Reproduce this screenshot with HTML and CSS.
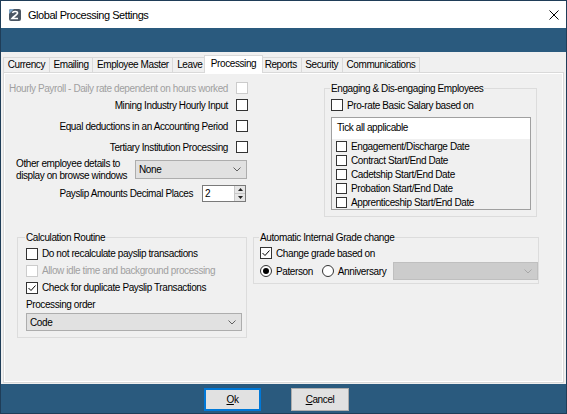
FILE: index.html
```html
<!DOCTYPE html>
<html lang="en">

<head>
    <meta charset="UTF-8">
    <title>Global Processing Settings</title>
    <link rel="stylesheet" href="styles.css">
</head>

<body>
    <div class="window">
        <div class="titlebar">
            <svg class="app-icon" width="12" height="12" viewBox="0 0 12 12">
                <rect x="0" y="0" width="12" height="12" rx="2" fill="#4a5563" />
                <path d="M0 5 L5 0 L2 0 Q0 0 0 2 Z" fill="#7fa6c8" />
                <path d="M3.5 4 C4 1.8 9 2 8.5 4.3 C8 6 5 7 3 9.5 L9 9.5" stroke="#fff" stroke-width="1.6" fill="none" />
            </svg>
            <span class="title">Global Processing Settings</span>
            <svg class="close" width="10" height="10" viewBox="0 0 10 10">
                <path d="M0.5 0.5 L9.5 9.5 M9.5 0.5 L0.5 9.5" stroke="#000" stroke-width="1" />
            </svg>
        </div>

        <div class="band"></div>

        <div class="panel">
            <div class="tabs">
                <div class="tab">Currency</div>
                <div class="tab">Emailing</div>
                <div class="tab">Employee Master</div>
                <div class="tab">Leave</div>
                <div class="tab active">Processing</div>
                <div class="tab">Reports</div>
                <div class="tab">Security</div>
                <div class="tab">Communications</div>
            </div>

            <div class="page">
                <div class="top">
                    <div class="options">
                        <div class="opt-row disabled">
                            <span>Hourly Payroll - Daily rate dependent on hours worked</span>
                            <span class="check"></span>
                        </div>
                        <div class="opt-row near">
                            <span>Mining Industry Hourly Input</span>
                            <span class="check"></span>
                        </div>
                        <div class="opt-row">
                            <span>Equal deductions in an Accounting Period</span>
                            <span class="check"></span>
                        </div>
                        <div class="opt-row">
                            <span>Tertiary Institution Processing</span>
                            <span class="check"></span>
                        </div>
                        <div class="browse-row">
                            <span class="browse-label">Other employee details to<br>display on browse windows</span>
                            <div class="combo browse-combo">
                                <span>None</span>
                                <svg width="8" height="5" viewBox="0 0 8 5"><path d="M0.5 0.5 L4 4 L7.5 0.5" stroke="#606060" fill="none" /></svg>
                            </div>
                        </div>
                        <div class="opt-row decimals">
                            <span>Payslip Amounts Decimal Places</span>
                            <div class="spin">
                                <span class="spin-value">2</span>
                                <div class="spin-btns">
                                    <div class="spin-btn"><svg width="5" height="3" viewBox="0 0 5 3"><path d="M0 3 L2.5 0 L5 3 Z" fill="#222" /></svg></div>
                                    <div class="spin-btn"><svg width="5" height="3" viewBox="0 0 5 3"><path d="M0 0 L2.5 3 L5 0 Z" fill="#222" /></svg></div>
                                </div>
                            </div>
                        </div>
                    </div>

                    <fieldset class="group engage">
                        <legend>Engaging &amp; Dis-engaging Employees</legend>
                        <div class="check-row prorate">
                            <span class="check"></span>
                            <span>Pro-rate Basic Salary based on</span>
                        </div>
                        <div class="listbox">
                            <div class="list-head">Tick all applicable</div>
                            <div class="list-item"><span class="check small"></span>Engagement/Discharge Date</div>
                            <div class="list-item"><span class="check small"></span>Contract Start/End Date</div>
                            <div class="list-item"><span class="check small"></span>Cadetship Start/End Date</div>
                            <div class="list-item"><span class="check small"></span>Probation Start/End Date</div>
                            <div class="list-item"><span class="check small"></span>Apprenticeship Start/End Date</div>
                        </div>
                    </fieldset>
                </div>

                <div class="bottom">
                    <fieldset class="group calc">
                        <legend>Calculation Routine</legend>
                        <div class="check-row calc-row">
                            <span class="check"></span>
                            <span>Do not recalculate payslip transactions</span>
                        </div>
                        <div class="check-row calc-row disabled">
                            <span class="check"></span>
                            <span>Allow idle time and background processing</span>
                        </div>
                        <div class="check-row calc-row">
                            <span class="check checked"><svg width="10" height="10" viewBox="0 0 10 10"><path d="M1.5 5 L4 7.5 L8.5 2.5" stroke="#000" stroke-width="1" fill="none" /></svg></span>
                            <span>Check for duplicate Payslip Transactions</span>
                        </div>
                        <div class="order-label">Processing order</div>
                        <div class="combo order-combo">
                            <span>Code</span>
                            <svg width="8" height="5" viewBox="0 0 8 5"><path d="M0.5 0.5 L4 4 L7.5 0.5" stroke="#606060" fill="none" /></svg>
                        </div>
                    </fieldset>

                    <fieldset class="group grade">
                        <legend>Automatic Internal Grade change</legend>
                        <div class="check-row grade-check">
                            <span class="check checked"><svg width="10" height="10" viewBox="0 0 10 10"><path d="M1.5 5 L4 7.5 L8.5 2.5" stroke="#000" stroke-width="1" fill="none" /></svg></span>
                            <span>Change grade based on</span>
                        </div>
                        <div class="radio-row">
                            <span class="radio on"></span>
                            <span class="radio-text">Paterson</span>
                            <span class="radio anniversary"></span>
                            <span class="radio-text">Anniversary</span>
                            <div class="combo grade-combo">
                                <span></span>
                                <svg width="8" height="5" viewBox="0 0 8 5"><path d="M0.5 0.5 L4 4 L7.5 0.5" stroke="#a8a8a8" fill="none" /></svg>
                            </div>
                        </div>
                    </fieldset>
                </div>
            </div>
        </div>

        <div class="footer">
            <button class="btn default"><u>O</u>k</button>
            <button class="btn"><u>C</u>ancel</button>
        </div>
    </div>
</body>

</html>
```

FILE: styles.css
```css
* {
    box-sizing: border-box;
}

body {
    margin: 0;
    font-family: "Liberation Sans", Arial, sans-serif;
    font-size: 10px;
    letter-spacing: -0.4px;
    color: #000;
}

.window {
    width: 567px;
    height: 414px;
    border: 1px solid #1f3d58;
    background-color: #2a5a7e;
    display: flex;
    flex-direction: column;
}

/* title bar */

.titlebar {
    height: 27px;
    background-color: #fff;
    display: flex;
    align-items: center;
    padding-left: 8px;
}

.title {
    margin-left: 7px;
    font-size: 11px;
    letter-spacing: -0.45px;
    color: #000;
}

.close {
    margin-left: auto;
    margin-right: 7px;
}

.band {
    height: 24px;
}

/* main panel with tabs */

.panel {
    height: 332px;
    background-color: #f0f0f0;
    padding: 3px 2px 1px 2px;
    display: flex;
    flex-direction: column;
}

.tabs {
    height: 17px;
    display: flex;
    align-items: flex-end;
    padding-left: 1px;
}

.tab {
    height: 15px;
    line-height: 14px;
    padding: 0 3.7px;
    border: 1px solid #d9d9d9;
    border-bottom: none;
    margin-left: -1px;
    background-color: #f0f0f0;
}

.tab.active {
    height: 18px;
    line-height: 16px;
    margin: 0 -2px -1px -3px;
    padding: 0 5.7px;
    background-color: #fff;
    position: relative;
    z-index: 1;
}

.page {
    flex: 1;
    border: 1px solid #d9d9d9;
    box-shadow: inset 0 0 0 1px #fff;
    padding: 7px 0 0 12px;
}

.top {
    display: flex;
    align-items: flex-start;
}

/* left column options */

.options {
    flex: none;
    width: 232px;
    min-width: 0;
}

.opt-row {
    height: 16px;
    margin-top: 5px;
    display: flex;
    align-items: center;
    justify-content: flex-end;
    gap: 8px;
    white-space: nowrap;
}

.opt-row:first-child {
    margin-top: 0;
}

.opt-row.near {
    margin-top: 1px;
}

.opt-row.disabled {
    color: #a0a0a0;
}

.check {
    width: 12px;
    height: 12px;
    flex: none;
    border: 1px solid #333;
    background-color: #fff;
    display: flex;
    align-items: center;
    justify-content: center;
}

.disabled .check {
    border-color: #cccccc;
}

.check.small {
    width: 11px;
    height: 11px;
}

.browse-row {
    height: 19px;
    margin-top: 5px;
    display: flex;
    align-items: center;
    white-space: nowrap;
}

.browse-label {
    width: 119px;
    line-height: 11.5px;
}

.combo {
    height: 19px;
    border: 1px solid #adadad;
    background-color: #e1e1e1;
    display: flex;
    align-items: center;
    justify-content: space-between;
    padding: 0 5px 0 3px;
    overflow: hidden;
}

.browse-combo {
    flex: none;
    width: 112px;
}

.opt-row.decimals {
    margin-top: 6px;
    gap: 9px;
}

.spin {
    flex: none;
    width: 44px;
    height: 17px;
    border: 1px solid #7a7a7a;
    background-color: #fff;
    display: flex;
    justify-content: space-between;
    padding-left: 2px;
    margin-right: 2px;
}

.spin-value {
    line-height: 15px;
}

.spin-btns {
    width: 11px;
    display: flex;
    flex-direction: column;
}

.spin-btn {
    flex: 1;
    background-color: #e6e6e6;
    border-left: 1px solid #c8c8c8;
    display: flex;
    align-items: center;
    justify-content: center;
}

.spin-btn + .spin-btn {
    border-top: 1px solid #c8c8c8;
}

/* group boxes */

.group {
    margin: 0;
    border: 1px solid #dcdcdc;
    min-width: 0;
}

.group legend {
    padding: 0 1px;
    margin-left: -1px;
    line-height: 13px;
}

.engage {
    width: 213px;
    margin-left: 76px;
    margin-top: 2px;
    padding: 0 0 6px 6px;
}

.check-row {
    display: flex;
    align-items: center;
    gap: 4px;
    white-space: nowrap;
}

.check-row.disabled {
    color: #a0a0a0;
}

.prorate {
    height: 14px;
    margin-top: 3px;
}

.listbox {
    width: 200px;
    margin-top: 5px;
    border: 1px solid #a0a0a0;
}

.list-head {
    height: 21px;
    line-height: 20px;
    padding-left: 5px;
    background-color: #fff;
}

.list-item {
    height: 14px;
    display: flex;
    align-items: center;
    gap: 4px;
    padding-left: 4px;
}

.bottom {
    display: flex;
    align-items: flex-start;
    margin-top: 14px;
}

.calc {
    width: 230px;
    margin-left: 1px;
    padding: 0 5px 6px 8px;
}

.calc-row {
    height: 17px;
}

.calc-row:first-of-type {
    margin-top: 1px;
}

.order-label {
    margin-top: 2px;
    line-height: 13px;
}

.order-combo {
    margin-top: 2px;
    width: 216px;
    height: 18px;
}

.grade {
    width: 286px;
    margin-left: 6px;
    padding: 0 2px 3px 6px;
}

.grade-check {
    height: 14px;
    margin-top: 2px;
}

.radio-row {
    height: 18px;
    margin-top: 2px;
    display: flex;
    align-items: center;
    white-space: nowrap;
}

.radio {
    flex: none;
    width: 12px;
    height: 12px;
    border: 1px solid #333;
    border-radius: 50%;
    background-color: #fff;
    display: flex;
    align-items: center;
    justify-content: center;
}

.radio.on::after {
    content: "";
    width: 6px;
    height: 6px;
    border-radius: 50%;
    background-color: #000;
}

.radio-text {
    margin-left: 4px;
}

.radio.anniversary {
    margin-left: 9px;
}

.grade-combo {
    flex: none;
    width: 145px;
    height: 18px;
    margin-left: 7px;
    background-color: #cccccc;
    border-color: #bfbfbf;
}

/* footer buttons */

.footer {
    flex: 1;
    display: flex;
    align-items: flex-start;
    padding: 4px 0 0 203px;
    gap: 30px;
}

.btn {
    width: 57px;
    height: 23px;
    font-family: inherit;
    font-size: 10px;
    letter-spacing: -0.4px;
    background-color: #e1e1e1;
    border: 1px solid #adadad;
    padding: 0;
    color: #000;
}

.btn + .btn {
    width: 58px;
}

.btn.default {
    border: 2px solid #0078d7;
}
```
